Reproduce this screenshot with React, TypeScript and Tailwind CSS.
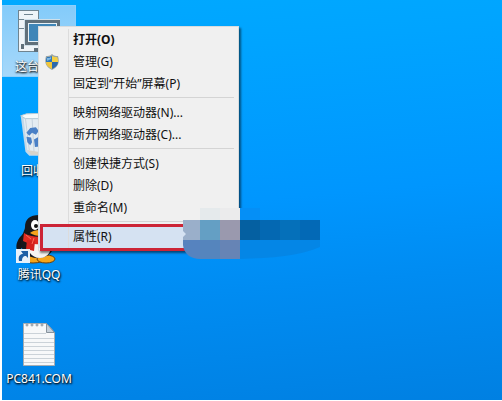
import React from 'react';
import clsx from 'clsx';

interface MenuItem {
  label: string;
  bold?: boolean;
  shield?: boolean;
  active?: boolean;
}

// Items are grouped between separators
const menuGroups: MenuItem[][] = [
  [
    { label: '打开(O)', bold: true },
    { label: '管理(G)', shield: true },
    { label: '固定到“开始”屏幕(P)' },
  ],
  [{ label: '映射网络驱动器(N)...' }, { label: '断开网络驱动器(C)...' }],
  [{ label: '创建快捷方式(S)' }, { label: '删除(D)' }, { label: '重命名(M)' }],
  [{ label: '属性(R)', active: true }],
];

function ComputerIcon() {
  return (
    <svg viewBox="0 0 48 48" className="w-12 h-12" aria-hidden="true">
      <rect x="3.5" y="1.5" width="20" height="41" fill="#eef4f8" stroke="#6f8490" />
      <path d="M9 5.500h9M4 10.500h19M4 19.500h19" stroke="#6f8490" fill="none" />
      <path d="M6 35h3v5H6z" fill="#5f707b" />
      <rect x="9" y="10" width="36" height="27" fill="#cfe0ea" />
      <rect x="10" y="11" width="35" height="25" fill="#5f707b" />
      <rect x="13" y="14" width="29" height="19" fill="#e6f0f6" />
      <rect x="14" y="15" width="27" height="17" fill="#3f86b8" />
      <path d="M19 39h16v4H19z" fill="#5f707b" />
    </svg>
  );
}

function RecycleBinIcon() {
  return (
    <svg viewBox="0 0 48 48" className="w-12 h-12" aria-hidden="true">
      <g transform="translate(0 -2) scale(0.95)">
        <path d="M6 5l6-2 24-1 4 4-6 38-5 3H15l-4-4z" fill="#c3d8e8" />
        <path d="M9 8l29-2-5 37-16 1-4-3z" fill="#e4ecf2" />
        <path d="M6 5l6-2 24-1 4 4-8 2H11z" fill="#f7fafb" stroke="#b4c8d4" />
        <path d="M11 8l4 33M18 8l2 35M27 8l-1 35" stroke="#c3d1dc" fill="none" />
        <path d="M16 18l6-1 3 4-3 4-4-2-3 3-3-3zM12 27l5 1 1 5-2 3-3-3zM20 30l5-3 5 4-2 6-7 1z" fill="#4a80c6" />
        <path d="M13 41l4 5h13l3-5-9 2z" fill="#d8d3ca" />
      </g>
    </svg>
  );
}

function QQIcon() {
  return (
    <svg viewBox="0 3 48 48" className="w-12 h-12 overflow-visible" aria-hidden="true">
      <ellipse cx="18" cy="45" rx="11" ry="4" fill="#f5a51b" stroke="#6e3d06" />
      <ellipse cx="31" cy="45" rx="9" ry="4" fill="#f5a51b" stroke="#6e3d06" />
      <path d="M8 20C3 24 0 31 2 36c2 2 4-1 6-4zM34 20c5 5 7 10 5 15-2 1-4-1-6-4z" fill="#15151a" />
      <path d="M24 1C15 1 10 5 10 13c0 3-3 7-4 13-1 11 6 18 17 18s18-8 16-19c-1-5-3-8-3-12C36 5 32 1 24 1z" fill="#17181d" />
      <path d="M14 27c-3 9 2 17 11 17 8 0 13-8 11-18z" fill="#f7f5f0" />
      <ellipse cx="20" cy="11" rx="4" ry="5" fill="#fff" />
      <ellipse cx="29" cy="11" rx="4" ry="5" fill="#fff" />
      <circle cx="21" cy="12" r="2" fill="#111" />
      <circle cx="28" cy="12" r="2" fill="#111" />
      <path d="M15 19c4-4 15-4 20 0-5 4-14 4-20 0z" fill="#f6a31c" />
      <path d="M9 19c8 5 21 5 28 0l1 7c-8 5-20 6-30 1z" fill="#e02b22" />
      <path d="M12 26l8 1-1 10-8-2z" fill="#d3221d" />
      <path d="M11 21l5 4M19 24l-2 6" stroke="#ff6b57" fill="none" />
      <rect x="1" y="35" width="14" height="14" fill="#e8f1fa" />
      <path d="M4 47c-1-5 1-7 4-7l-2-3h7v7l-2-2c-3 0-4 2-4 5z" fill="#1c5ea6" />
    </svg>
  );
}

function TextFileIcon() {
  return (
    <svg viewBox="0 1 48 48" className="w-12 h-12" aria-hidden="true">
      <path d="M8.500 3.500h23l8 9v33h-31z" fill="#f7f8f9" stroke="#a6adb3" />
      <path d="M31.500 3.500v9h8z" fill="#c6d0da" stroke="#87929c" />
      <path
        d="M9 13.500h22M9 18.500h30M9 22.500h30M9 26.500h30M9 30.500h30M9 34.500h30M9 38.500h30M9 42.500h30"
        stroke="#cbd2d8"
      />
      <g fill="#e9edf0" stroke="#8b949c">
        <circle cx="12" cy="5" r="1" />
        <circle cx="17" cy="5" r="1" />
        <circle cx="22" cy="5" r="1" />
        <circle cx="27" cy="5" r="1" />
      </g>
    </svg>
  );
}

function ShieldIcon() {
  return (
    <svg viewBox="0 0 16 16" className="w-4 h-4" aria-hidden="true">
      <path d="M8 0c2 2 4 2 6 2 2 7 0 11-6 14C2 13 0 9 2 2c2 0 4 0 6-2z" fill="#9aa5a5" />
      <path d="M8 2v6H2c0-2 0-3 1-5 2 0 3 0 5-1z" fill="#2f78bd" />
      <path d="M8 2c2 1 3 1 5 1 1 2 1 3 1 5H8z" fill="#f4cf45" />
      <path d="M2 8h6v7c-4-2-6-4-6-7z" fill="#f1c63a" />
      <path d="M14 8H8v7c4-2 6-4 6-7z" fill="#2a68ad" />
      <path d="M3 4c2 0 3 0 4-1v2L3 7z" fill="#7db7e2" />
    </svg>
  );
}

const shortcuts = [
  { label: '这台电脑', Icon: ComputerIcon, selected: true },
  { label: '回收站', Icon: RecycleBinIcon },
  { label: '腾讯QQ', Icon: QQIcon },
  { label: 'PC841.COM', Icon: TextFileIcon },
];

// Pixelated patch over the end of the highlighted row
function Mosaic() {
  return (
    <svg viewBox="0 0 140 52" className="absolute left-[182px] top-[208px] w-[140px] h-[52px] pointer-events-none" aria-hidden="true">
      <rect x="18" y="0" width="20" height="12" fill="#e5eaec" />
      <rect x="38" y="0" width="20" height="12" fill="#ebebec" />
      <rect x="58" y="0" width="20" height="12" fill="#058ff6" />
      <path d="M1 12h17v20H1v-3l3-3-3-3z" fill="#9aafca" />
      <rect x="18" y="12" width="20" height="20" fill="#649fc4" />
      <rect x="38" y="12" width="20" height="20" fill="#9a99ae" />
      <rect x="58" y="12" width="20" height="20" fill="#0560a1" />
      <rect x="78" y="12" width="20" height="20" fill="#0468b2" />
      <rect x="98" y="12" width="20" height="20" fill="#0570ba" />
      <rect x="118" y="12" width="20" height="20" fill="#0369b6" />
      <path d="M1 32h17v19c-9 0-16-5-17-14z" fill="#5683bf" />
      <rect x="18" y="32" width="20" height="19" fill="#5585bd" />
      <rect x="38" y="32" width="20" height="19" fill="#6684b5" />
      <path d="M58 32h80v7c-20 9-48 11-80 12z" fill="#0486e6" />
    </svg>
  );
}

function ContextMenu() {
  return (
    <div
      role="menu"
      className="absolute left-[38px] top-[26px] w-[201px] py-[2px] bg-[#f0f0f0] border border-[#d8dcde] shadow-[2px_2px_2px_rgba(0,0,0,0.5)] text-xs text-[#111111]"
    >
      {menuGroups.map((group, index) => (
        <React.Fragment key={group[0].label}>
          {index > 0 && (
            <div role="separator" className="flex h-[7px]">
              <span className="w-[30px] shrink-0 border-r border-[#dcdcdc]" />
              <span className="flex-1 h-[3px] mr-1 border-b border-[#d4d4d4]" />
            </div>
          )}
          {group.map((item) => (
            <button
              key={item.label}
              role="menuitem"
              className={clsx(
                'relative flex w-full h-[22px] text-left whitespace-nowrap',
                item.bold && 'font-bold',
                item.active && 'bg-[#d5e2f2]'
              )}
            >
              <span className="flex w-[30px] shrink-0 items-center justify-center pr-1 border-r border-[#dcdcdc]">
                {item.shield && <ShieldIcon />}
              </span>
              <span className="pl-1 leading-[22px]">{item.label}</span>
              {item.active && (
                <span className="absolute left-px right-0 -top-[2px] -bottom-[3px] border-3 border-[#cc2436]" />
              )}
            </button>
          ))}
        </React.Fragment>
      ))}
    </div>
  );
}

export default function App() {
  return (
    <div className="min-h-screen bg-white pl-[2px] pb-px flex font-['Noto_Sans','Noto_Sans_CJK_SC',sans-serif]">
      <main className="flex-1 bg-[linear-gradient(175deg,#00a9ff_0%,#00a4ff_15%,#0096fe_50%,#008cf2_70%,#0080e2_100%)]">
        <div className="flex flex-col items-start gap-8 pt-[5px]">
          {shortcuts.map(({ label, Icon, selected }) => (
            <button
              key={label}
              className={clsx(
                'flex flex-col items-center w-[74px] h-[72px] pt-1',
                selected && 'bg-[linear-gradient(#83cbfa,#a6d8fa)] outline outline-[#8ed0fb] -outline-offset-1'
              )}
            >
              <Icon />
              <span className="mt-px text-xs leading-[18px] text-white [text-shadow:1px_1px_2px_#000,0_1px_2px_rgba(0,0,0,0.7)]">
                {label}
              </span>
            </button>
          ))}
        </div>
      </main>
      <ContextMenu />
      <Mosaic />
    </div>
  );
}
